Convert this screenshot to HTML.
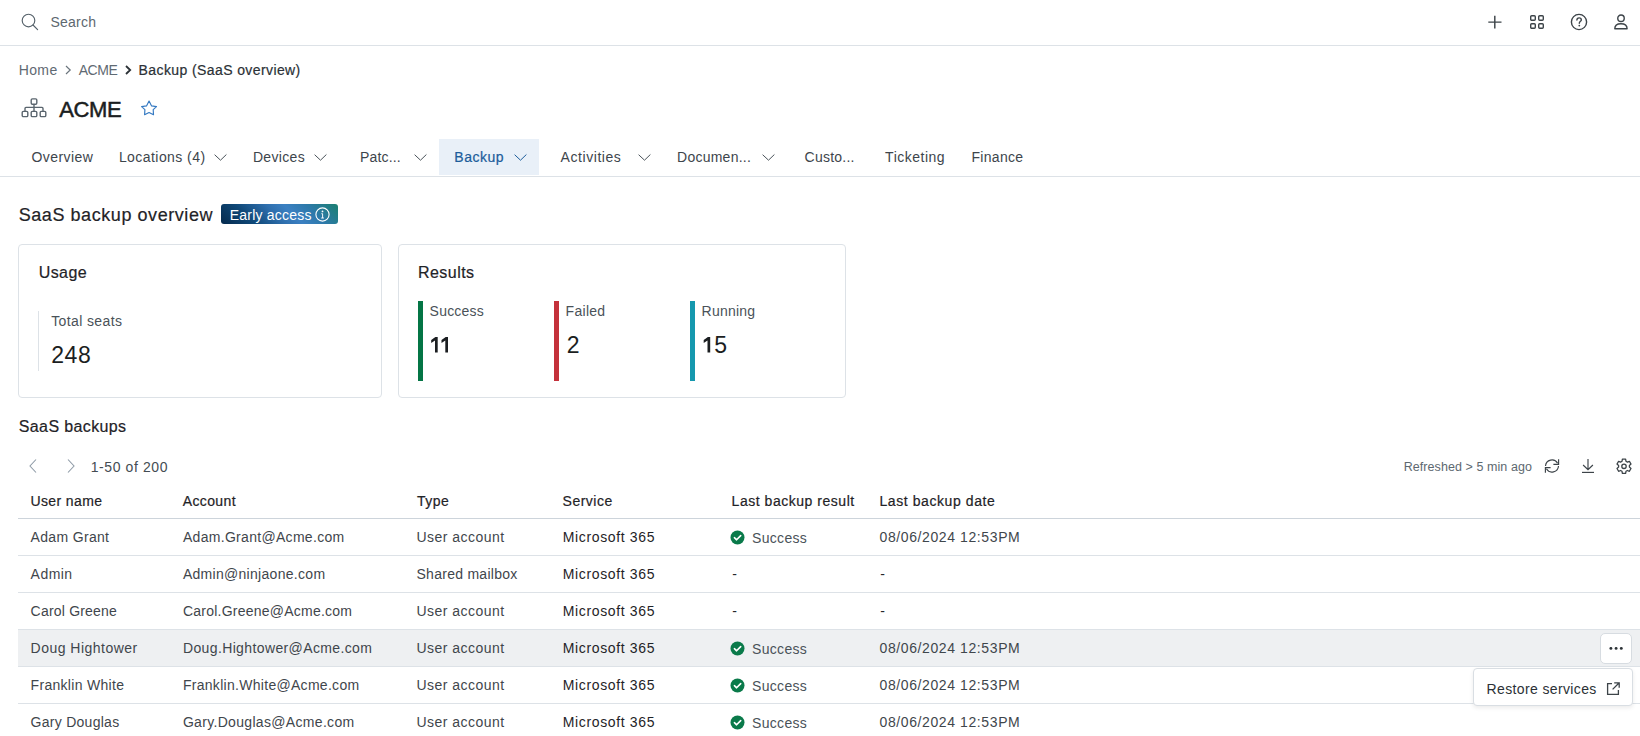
<!DOCTYPE html>
<html><head><meta charset="utf-8"><title>SaaS backup overview</title>
<style>
html,body{margin:0;padding:0;background:#fff;}
body{width:1640px;height:736px;overflow:hidden;position:relative;font-family:"Liberation Sans",sans-serif;}
.t{position:absolute;white-space:nowrap;line-height:1;}
.r{position:absolute;box-sizing:border-box;}
svg.r{overflow:visible;}
.badge{border-radius:3px;background:linear-gradient(45deg,#052a4d 0%,#0f4878 25%,#2f6fae 47%,#3b80c2 60%,#2d79aa 76%,#1b8070 100%);}
</style></head>
<body>
<div class="r" style="left:0px;top:45px;width:1640px;height:1px;background:#dde2e7"></div>
<svg class="r" style="left:21px;top:13px;" width="18" height="18" viewBox="0 0 18 18"><circle cx="7.5" cy="7.5" r="6.3" fill="none" stroke="#55616a" stroke-width="1.15"/><path d="M12 12 L16.6 16.6" stroke="#55616a" stroke-width="1.15" stroke-linecap="round"/></svg>
<div class="t" style="left:50.5px;top:15.3px;font-size:14px;color:#5d6870;letter-spacing:0.226px;">Search</div>
<svg class="r" style="left:1487px;top:14px;" width="16" height="16" viewBox="0 0 16 16"><path d="M7.8 1.8 V14.5 M1.3 8.1 H14.5" stroke="#3d4449" stroke-width="1.45"/></svg>
<svg class="r" style="left:1529px;top:14px;" width="16" height="16" viewBox="0 0 16 16"><g fill="none" stroke="#3d4449" stroke-width="1.4"><rect x="1.7" y="1.7" width="4.6" height="4.6" rx="1"/><rect x="9.7" y="1.7" width="4.6" height="4.6" rx="1"/><rect x="1.7" y="9.7" width="4.6" height="4.6" rx="1"/><rect x="9.7" y="9.7" width="4.6" height="4.6" rx="1"/></g></svg>
<svg class="r" style="left:1570px;top:13px;" width="18" height="18" viewBox="0 0 18 18"><circle cx="9" cy="9" r="7.6" fill="none" stroke="#3d4449" stroke-width="1.4"/><path d="M6.9 7.1 C6.9 5.7 7.9 4.9 9.1 4.9 C10.4 4.9 11.3 5.8 11.3 6.9 C11.3 8.3 9.3 8.4 9.3 10.2" fill="none" stroke="#3d4449" stroke-width="1.4" stroke-linecap="round"/><circle cx="9.3" cy="12.6" r="0.9" fill="#3d4449"/></svg>
<svg class="r" style="left:1613px;top:13px;" width="17" height="18" viewBox="0 0 17 18"><circle cx="8.0" cy="5.2" r="3.25" fill="none" stroke="#3d4449" stroke-width="1.4"/><path d="M1.8 15.8 C1.8 12.6 4.4 10.7 7.95 10.7 C11.5 10.7 14.1 12.6 14.1 15.8 Z" fill="none" stroke="#3d4449" stroke-width="1.4" stroke-linejoin="round"/></svg>
<div class="t" style="left:18.7px;top:62.7px;font-size:14px;color:#5f6a73;letter-spacing:0.393px;">Home</div>
<svg class="r" style="left:64px;top:63.7px;" width="8" height="12" viewBox="0 0 8 12"><path d="M2 2 L6.2 6 L2 10" fill="none" stroke="#6b757d" stroke-width="1.2"/></svg>
<div class="t" style="left:78.7px;top:62.7px;font-size:14px;color:#5f6a73;letter-spacing:-0.463px;">ACME</div>
<svg class="r" style="left:124px;top:63.7px;" width="8" height="12" viewBox="0 0 8 12"><path d="M2 2 L6.2 6 L2 10" fill="none" stroke="#2b3136" stroke-width="1.8"/></svg>
<div class="t" style="left:138.6px;top:62.7px;font-size:14px;color:#2b3136;letter-spacing:0.398px;-webkit-text-stroke:0.2px currentColor;">Backup (SaaS overview)</div>
<svg class="r" style="left:21px;top:97px;" width="26" height="21" viewBox="0 0 26 21"><g fill="none" stroke="#5a656e" stroke-width="1.4"><rect x="10.2" y="1.9" width="5.6" height="5.3" rx="1.2"/><rect x="1.2" y="14.4" width="5.6" height="5.2" rx="1.2"/><rect x="10.2" y="14.4" width="5.6" height="5.2" rx="1.2"/><rect x="19.2" y="14.4" width="5.6" height="5.2" rx="1.2"/><path d="M13 7.2 V14.4 M4 14.4 V11.4 Q4 10.4 5 10.4 H21 Q22 10.4 22 11.4 V14.4"/></g></svg>
<div class="t" style="left:59.3px;top:98.8px;font-size:22px;color:#1b1e21;letter-spacing:-0.391px;-webkit-text-stroke:0.5px currentColor;">ACME</div>
<svg class="r" style="left:140px;top:99px;" width="18" height="18" viewBox="0 0 18 18"><path d="M9.05 2.1 L11.6 6.9 L16.5 7.6 L13.2 10.6 L13.5 15.7 L9.05 13.6 L4.6 15.7 L4.9 10.6 L1.6 7.6 L6.5 6.9 Z" fill="none" stroke="#3479c2" stroke-width="1.15" stroke-linejoin="round"/></svg>
<div class="r" style="left:0px;top:176px;width:1640px;height:1px;background:#dde2e7"></div>
<div class="r" style="left:439px;top:139px;width:100px;height:36px;background:#e9f0f8"></div>
<div class="t" style="left:31.4px;top:149.8px;font-size:14px;color:#3d454c;letter-spacing:0.459px;">Overview</div>
<div class="t" style="left:118.9px;top:149.8px;font-size:14px;color:#3d454c;letter-spacing:0.439px;">Locations (4)</div>
<svg class="r" style="left:213.5px;top:153px;" width="14" height="9" viewBox="0 0 14 9"><path d="M0.6 1.7 L6.5 7.2 L12.4 1.5" fill="none" stroke="#4a535a" stroke-width="1"/></svg>
<div class="t" style="left:252.9px;top:150.0px;font-size:14px;color:#3d454c;letter-spacing:0.331px;">Devices</div>
<svg class="r" style="left:314.0px;top:153px;" width="14" height="9" viewBox="0 0 14 9"><path d="M0.6 1.7 L6.5 7.2 L12.4 1.5" fill="none" stroke="#4a535a" stroke-width="1"/></svg>
<div class="t" style="left:360.1px;top:149.8px;font-size:14px;color:#3d454c;letter-spacing:0.130px;">Patc...</div>
<svg class="r" style="left:413.6px;top:153px;" width="14" height="9" viewBox="0 0 14 9"><path d="M0.6 1.7 L6.5 7.2 L12.4 1.5" fill="none" stroke="#4a535a" stroke-width="1"/></svg>
<div class="t" style="left:454.3px;top:149.8px;font-size:14px;color:#1d5d9b;letter-spacing:0.502px;-webkit-text-stroke:0.2px currentColor;">Backup</div>
<svg class="r" style="left:513.5px;top:153px;" width="14" height="9" viewBox="0 0 14 9"><path d="M0.6 1.7 L6.5 7.2 L12.4 1.5" fill="none" stroke="#1d5d9b" stroke-width="1"/></svg>
<div class="t" style="left:560.6px;top:149.8px;font-size:14px;color:#3d454c;letter-spacing:0.557px;">Activities</div>
<svg class="r" style="left:638.2px;top:153px;" width="14" height="9" viewBox="0 0 14 9"><path d="M0.6 1.7 L6.5 7.2 L12.4 1.5" fill="none" stroke="#4a535a" stroke-width="1"/></svg>
<div class="t" style="left:677.1px;top:149.8px;font-size:14px;color:#3d454c;letter-spacing:0.234px;">Documen...</div>
<svg class="r" style="left:761.8px;top:153px;" width="14" height="9" viewBox="0 0 14 9"><path d="M0.6 1.7 L6.5 7.2 L12.4 1.5" fill="none" stroke="#4a535a" stroke-width="1"/></svg>
<div class="t" style="left:804.6px;top:149.8px;font-size:14px;color:#3d454c;letter-spacing:0.233px;">Custo...</div>
<div class="t" style="left:885.1px;top:149.8px;font-size:14px;color:#3d454c;letter-spacing:0.502px;">Ticketing</div>
<div class="t" style="left:971.5px;top:149.8px;font-size:14px;color:#3d454c;letter-spacing:0.288px;">Finance</div>
<div class="t" style="left:18.7px;top:205.9px;font-size:18px;color:#1f2327;letter-spacing:0.563px;-webkit-text-stroke:0.2px currentColor;">SaaS backup overview</div>
<div class="r badge" style="left:221px;top:204px;width:117px;height:20px;"></div>
<div class="t" style="left:229.8px;top:207.6px;font-size:14px;color:#ffffff;letter-spacing:0.205px;">Early access</div>
<svg class="r" style="left:315px;top:207px;" width="15" height="15" viewBox="0 0 15 15"><circle cx="7.5" cy="7.5" r="6.6" fill="none" stroke="#fff" stroke-width="1.1"/><circle cx="7.5" cy="4.4" r="0.9" fill="#fff"/><path d="M6.4 6.7 H7.6 V11 M6.2 11 H8.9" fill="none" stroke="#fff" stroke-width="0.95"/></svg>
<div class="r" style="left:18px;top:244px;width:364px;height:154px;border:1px solid #dde2e7;border-radius:4px;background:#fff"></div>
<div class="r" style="left:398px;top:244px;width:448px;height:154px;border:1px solid #dde2e7;border-radius:4px;background:#fff"></div>
<div class="t" style="left:38.7px;top:265.2px;font-size:16px;color:#1f2327;letter-spacing:0.424px;-webkit-text-stroke:0.2px currentColor;">Usage</div>
<div class="r" style="left:38px;top:311px;width:1px;height:60px;background:#dde2e7"></div>
<div class="t" style="left:51.2px;top:314.1px;font-size:14px;color:#4a5259;letter-spacing:0.381px;">Total seats</div>
<div class="t" style="left:51.2px;top:344.0px;font-size:23px;color:#1b1e21;letter-spacing:0.570px;">248</div>
<div class="t" style="left:418.0px;top:264.8px;font-size:16px;color:#1f2327;letter-spacing:0.444px;-webkit-text-stroke:0.2px currentColor;">Results</div>
<div class="r" style="left:418px;top:301px;width:5px;height:80px;background:#047545"></div>
<div class="t" style="left:429.6px;top:304.0px;font-size:14px;color:#4a5259;letter-spacing:0.213px;">Success</div>
<div class="r" style="left:554px;top:301px;width:5px;height:80px;background:#c4313b"></div>
<div class="t" style="left:565.6px;top:304.0px;font-size:14px;color:#4a5259;letter-spacing:0.282px;">Failed</div>
<div class="r" style="left:690px;top:301px;width:5px;height:80px;background:#1598ae"></div>
<div class="t" style="left:701.6px;top:304.0px;font-size:14px;color:#4a5259;letter-spacing:0.211px;">Running</div>
<svg class="r" style="left:430px;top:336px;" width="20" height="18" viewBox="0 0 20 18"><path d="M7.7 1.1 V16.6 H5.0 V4.6 L1.2 6.9 V4.1 L5.4 1.1 Z" fill="#1b1e21"/><path d="M18.0 1.1 V16.6 H15.3 V4.6 L11.5 6.9 V4.1 L15.700000000000001 1.1 Z" fill="#1b1e21"/></svg>
<div class="t" style="left:566.8px;top:334.2px;font-size:23px;color:#1b1e21;letter-spacing:-0.197px;">2</div>
<svg class="r" style="left:702px;top:336px;" width="10" height="18" viewBox="0 0 10 18"><path d="M8.2 1.1 V16.6 H5.5 V4.6 L1.7 6.9 V4.1 L5.9 1.1 Z" fill="#1b1e21"/></svg>
<div class="t" style="left:714.2px;top:334.2px;font-size:23px;color:#1b1e21;letter-spacing:-0.997px;">5</div>
<div class="t" style="left:18.8px;top:419.0px;font-size:16px;color:#1f2327;letter-spacing:0.372px;-webkit-text-stroke:0.2px currentColor;">SaaS backups</div>
<svg class="r" style="left:28px;top:458px;" width="10" height="16" viewBox="0 0 10 16"><path d="M8 1.5 L2 8 L8 14.5" fill="none" stroke="#8f9ba7" stroke-width="1.1"/></svg>
<svg class="r" style="left:66px;top:458px;" width="10" height="16" viewBox="0 0 10 16"><path d="M2 1.5 L8 8 L2 14.5" fill="none" stroke="#8f9ba7" stroke-width="1.1"/></svg>
<div class="t" style="left:90.7px;top:459.7px;font-size:14px;color:#444c53;letter-spacing:0.591px;">1-50 of 200</div>
<div class="t" style="left:1403.7px;top:460.6px;font-size:12.5px;color:#5d6870;letter-spacing:0.072px;">Refreshed &gt; 5 min ago</div>
<svg class="r" style="left:1543px;top:458px;" width="18" height="16" viewBox="0 0 18 16"><g fill="none" stroke="#3d4449" stroke-width="1.15"><path d="M2.5 8 A6.5 6.5 0 0 1 14.6 5.2"/><path d="M15.6 1.3 V6.4 H10.4"/><path d="M15.5 8 A6.5 6.5 0 0 1 3.4 10.8"/><path d="M2.4 14.7 V9.6 H7.6"/></g></svg>
<svg class="r" style="left:1581px;top:458px;" width="14" height="16" viewBox="0 0 14 16"><g fill="none" stroke="#3d4449" stroke-width="1.15"><path d="M7 1 V11.5 M2.1 7.0 L7 11.7 L11.9 7.0"/><path d="M1 14.4 H13"/></g></svg>
<svg class="r" style="left:1615px;top:458px;" width="18" height="18" viewBox="0 0 18 18"><g fill="none" stroke="#3d4449" stroke-width="1.3" stroke-linejoin="round"><path d="M7.4 1.2 H10.6 L11 3.3 L12.4 4.1 L14.4 3.3 L16 6.1 L14.4 7.5 V9.1 L16 10.5 L14.4 13.3 L12.4 12.5 L11 13.3 L10.6 15.4 H7.4 L7 13.3 L5.6 12.5 L3.6 13.3 L2 10.5 L3.6 9.1 V7.5 L2 6.1 L3.6 3.3 L5.6 4.1 L7 3.3 Z"/><circle cx="9" cy="8.3" r="2.2"/></g></svg>
<div class="r" style="left:18px;top:518px;width:1622px;height:1px;background:#cdd4db"></div>
<div class="t" style="left:30.5px;top:493.9px;font-size:14px;color:#1f2327;letter-spacing:0.374px;-webkit-text-stroke:0.2px currentColor;">User name</div>
<div class="t" style="left:182.7px;top:493.9px;font-size:14px;color:#1f2327;letter-spacing:0.389px;-webkit-text-stroke:0.2px currentColor;">Account</div>
<div class="t" style="left:417.0px;top:493.9px;font-size:14px;color:#1f2327;letter-spacing:0.514px;-webkit-text-stroke:0.2px currentColor;">Type</div>
<div class="t" style="left:562.6px;top:493.9px;font-size:14px;color:#1f2327;letter-spacing:0.490px;-webkit-text-stroke:0.2px currentColor;">Service</div>
<div class="t" style="left:731.6px;top:493.9px;font-size:14px;color:#1f2327;letter-spacing:0.529px;-webkit-text-stroke:0.2px currentColor;">Last backup result</div>
<div class="t" style="left:879.4px;top:493.9px;font-size:14px;color:#1f2327;letter-spacing:0.582px;-webkit-text-stroke:0.2px currentColor;">Last backup date</div>
<div class="r" style="left:18px;top:555px;width:1622px;height:1px;background:#dde2e7"></div>
<div class="t" style="left:30.6px;top:530.0px;font-size:14px;color:#3f464c;letter-spacing:0.325px;">Adam Grant</div>
<div class="t" style="left:182.9px;top:530.0px;font-size:14px;color:#3f464c;letter-spacing:0.306px;">Adam.Grant@Acme.com</div>
<div class="t" style="left:416.5px;top:530.0px;font-size:14px;color:#3f464c;letter-spacing:0.479px;">User account</div>
<div class="t" style="left:562.8px;top:530.0px;font-size:14px;color:#1f2327;letter-spacing:0.638px;">Microsoft 365</div>
<svg class="r" style="left:729.6px;top:530.4px;" width="15" height="15" viewBox="0 0 15 15"><circle cx="7.5" cy="7.5" r="7" fill="#0a7a4a"/><path d="M4.4 7.7 L6.6 9.8 L10.7 5.6" fill="none" stroke="#fff" stroke-width="1.6" stroke-linecap="round" stroke-linejoin="round"/></svg>
<div class="t" style="left:752.0px;top:530.8px;font-size:14px;color:#4a5259;letter-spacing:0.313px;">Success</div>
<div class="t" style="left:879.5px;top:530.0px;font-size:14px;color:#3f464c;letter-spacing:0.603px;">08/06/2024 12:53PM</div>
<div class="r" style="left:18px;top:592px;width:1622px;height:1px;background:#dde2e7"></div>
<div class="t" style="left:30.6px;top:567.0px;font-size:14px;color:#3f464c;letter-spacing:0.466px;">Admin</div>
<div class="t" style="left:182.9px;top:567.0px;font-size:14px;color:#3f464c;letter-spacing:0.293px;">Admin@ninjaone.com</div>
<div class="t" style="left:416.5px;top:567.0px;font-size:14px;color:#3f464c;letter-spacing:0.269px;">Shared mailbox</div>
<div class="t" style="left:562.8px;top:567.0px;font-size:14px;color:#1f2327;letter-spacing:0.638px;">Microsoft 365</div>
<div class="t" style="left:732.3px;top:567.0px;font-size:14px;color:#26292c;letter-spacing:1.144px;">-</div>
<div class="t" style="left:880.2px;top:567.0px;font-size:14px;color:#26292c;letter-spacing:1.144px;">-</div>
<div class="r" style="left:18px;top:629px;width:1622px;height:1px;background:#dde2e7"></div>
<div class="t" style="left:30.6px;top:604.0px;font-size:14px;color:#3f464c;letter-spacing:0.200px;">Carol Greene</div>
<div class="t" style="left:182.9px;top:604.0px;font-size:14px;color:#3f464c;letter-spacing:0.237px;">Carol.Greene@Acme.com</div>
<div class="t" style="left:416.5px;top:604.0px;font-size:14px;color:#3f464c;letter-spacing:0.479px;">User account</div>
<div class="t" style="left:562.8px;top:604.0px;font-size:14px;color:#1f2327;letter-spacing:0.638px;">Microsoft 365</div>
<div class="t" style="left:732.3px;top:604.0px;font-size:14px;color:#26292c;letter-spacing:1.144px;">-</div>
<div class="t" style="left:880.2px;top:604.0px;font-size:14px;color:#26292c;letter-spacing:1.144px;">-</div>
<div class="r" style="left:18px;top:630px;width:1622px;height:36px;background:#eef0f2"></div>
<div class="r" style="left:18px;top:666px;width:1622px;height:1px;background:#dde2e7"></div>
<div class="t" style="left:30.6px;top:641.0px;font-size:14px;color:#3f464c;letter-spacing:0.475px;">Doug Hightower</div>
<div class="t" style="left:182.9px;top:641.0px;font-size:14px;color:#3f464c;letter-spacing:0.379px;">Doug.Hightower@Acme.com</div>
<div class="t" style="left:416.5px;top:641.0px;font-size:14px;color:#3f464c;letter-spacing:0.479px;">User account</div>
<div class="t" style="left:562.8px;top:641.0px;font-size:14px;color:#1f2327;letter-spacing:0.638px;">Microsoft 365</div>
<svg class="r" style="left:729.6px;top:641.4px;" width="15" height="15" viewBox="0 0 15 15"><circle cx="7.5" cy="7.5" r="7" fill="#0a7a4a"/><path d="M4.4 7.7 L6.6 9.8 L10.7 5.6" fill="none" stroke="#fff" stroke-width="1.6" stroke-linecap="round" stroke-linejoin="round"/></svg>
<div class="t" style="left:752.0px;top:641.8px;font-size:14px;color:#4a5259;letter-spacing:0.313px;">Success</div>
<div class="t" style="left:879.5px;top:641.0px;font-size:14px;color:#3f464c;letter-spacing:0.603px;">08/06/2024 12:53PM</div>
<div class="r" style="left:18px;top:703px;width:1622px;height:1px;background:#dde2e7"></div>
<div class="t" style="left:30.6px;top:678.0px;font-size:14px;color:#3f464c;letter-spacing:0.297px;">Franklin White</div>
<div class="t" style="left:182.9px;top:678.0px;font-size:14px;color:#3f464c;letter-spacing:0.293px;">Franklin.White@Acme.com</div>
<div class="t" style="left:416.5px;top:678.0px;font-size:14px;color:#3f464c;letter-spacing:0.479px;">User account</div>
<div class="t" style="left:562.8px;top:678.0px;font-size:14px;color:#1f2327;letter-spacing:0.638px;">Microsoft 365</div>
<svg class="r" style="left:729.6px;top:678.4px;" width="15" height="15" viewBox="0 0 15 15"><circle cx="7.5" cy="7.5" r="7" fill="#0a7a4a"/><path d="M4.4 7.7 L6.6 9.8 L10.7 5.6" fill="none" stroke="#fff" stroke-width="1.6" stroke-linecap="round" stroke-linejoin="round"/></svg>
<div class="t" style="left:752.0px;top:678.8px;font-size:14px;color:#4a5259;letter-spacing:0.313px;">Success</div>
<div class="t" style="left:879.5px;top:678.0px;font-size:14px;color:#3f464c;letter-spacing:0.603px;">08/06/2024 12:53PM</div>
<div class="r" style="left:18px;top:740px;width:1622px;height:1px;background:#dde2e7"></div>
<div class="t" style="left:30.6px;top:715.0px;font-size:14px;color:#3f464c;letter-spacing:0.270px;">Gary Douglas</div>
<div class="t" style="left:182.9px;top:715.0px;font-size:14px;color:#3f464c;letter-spacing:0.321px;">Gary.Douglas@Acme.com</div>
<div class="t" style="left:416.5px;top:715.0px;font-size:14px;color:#3f464c;letter-spacing:0.479px;">User account</div>
<div class="t" style="left:562.8px;top:715.0px;font-size:14px;color:#1f2327;letter-spacing:0.638px;">Microsoft 365</div>
<svg class="r" style="left:729.6px;top:715.4px;" width="15" height="15" viewBox="0 0 15 15"><circle cx="7.5" cy="7.5" r="7" fill="#0a7a4a"/><path d="M4.4 7.7 L6.6 9.8 L10.7 5.6" fill="none" stroke="#fff" stroke-width="1.6" stroke-linecap="round" stroke-linejoin="round"/></svg>
<div class="t" style="left:752.0px;top:715.8px;font-size:14px;color:#4a5259;letter-spacing:0.313px;">Success</div>
<div class="t" style="left:879.5px;top:715.0px;font-size:14px;color:#3f464c;letter-spacing:0.603px;">08/06/2024 12:53PM</div>
<div class="r" style="left:1600px;top:633px;width:32px;height:31px;background:#fff;border:1px solid #d7dce1;border-radius:5px"></div>
<svg class="r" style="left:1606px;top:644px;" width="20" height="8" viewBox="0 0 20 8"><circle cx="4.9" cy="4.4" r="1.45" fill="#2b3136"/><circle cx="10.1" cy="4.4" r="1.45" fill="#2b3136"/><circle cx="15.3" cy="4.4" r="1.45" fill="#2b3136"/></svg>
<div class="r" style="left:1473px;top:668px;width:160px;height:38px;background:#fff;border:1px solid #d9dee3;border-radius:4px;box-shadow:0 2px 4px rgba(0,0,0,0.08)"></div>
<div class="t" style="left:1486.5px;top:682.1px;font-size:14px;color:#2b3136;letter-spacing:0.374px;">Restore services</div>
<svg class="r" style="left:1605px;top:681px;" width="16" height="15" viewBox="0 0 16 15"><g fill="none" stroke="#3d4449" stroke-width="1.3"><path d="M7 2.6 H2.6 V13.4 H13.4 V9"/><path d="M9.2 1.8 H14.2 V6.8 M14 2 L7.6 8.4"/></g></svg>
</body></html>
